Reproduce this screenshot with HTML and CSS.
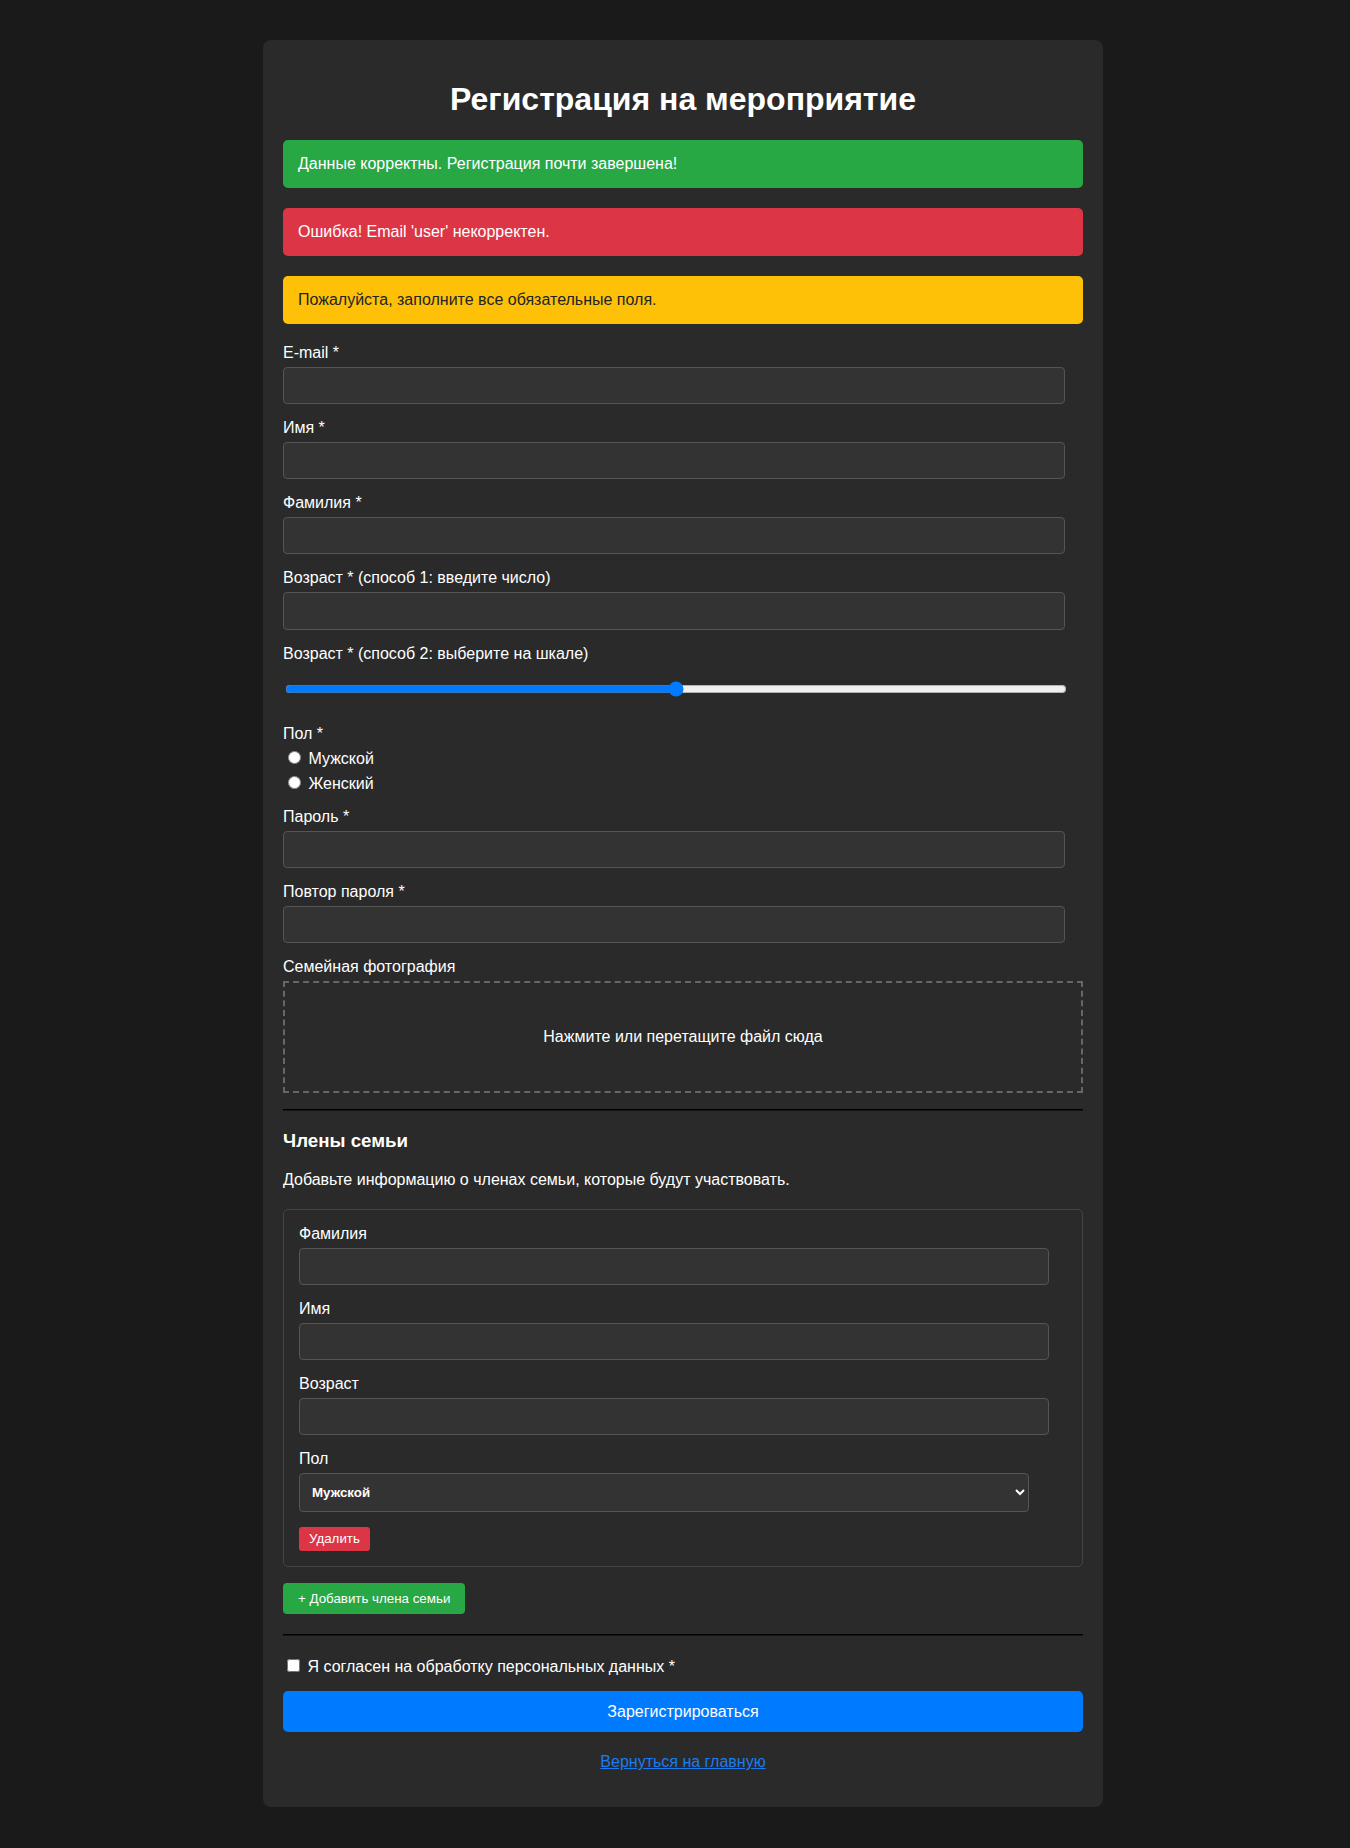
FILE: index.html
```html
<!DOCTYPE html>
<html lang="ru">
<head>
<meta charset="utf-8">
<title>Регистрация на мероприятие</title>
<link rel="stylesheet" href="styles.css">
</head>
<body>
<div class="container">
  <h1 class="title">Регистрация на мероприятие</h1>
  <div class="alert alert-success">Данные корректны. Регистрация почти завершена!</div>
  <div class="alert alert-danger">Ошибка! Email 'user' некорректен.</div>
  <div class="alert alert-warning">Пожалуйста, заполните все обязательные поля.</div>

  <form class="form">
    <div class="form-group">
      <label class="field-label">E-mail *</label>
      <input class="text-input" type="text">
    </div>
    <div class="form-group">
      <label class="field-label">Имя *</label>
      <input class="text-input" type="text">
    </div>
    <div class="form-group">
      <label class="field-label">Фамилия *</label>
      <input class="text-input" type="text">
    </div>
    <div class="form-group">
      <label class="field-label">Возраст * (способ 1: введите число)</label>
      <input class="text-input" type="text">
    </div>
    <div class="form-group">
      <label class="field-label">Возраст * (способ 2: выберите на шкале)</label>
      <input class="range-input" type="range" min="0" max="100" value="50">
    </div>
    <div class="form-group">
      <label class="field-label">Пол *</label>
      <div class="radio-list">
        <label class="radio-row"><input type="radio" name="g"> Мужской</label>
        <label class="radio-row"><input type="radio" name="g"> Женский</label>
      </div>
    </div>
    <div class="form-group">
      <label class="field-label">Пароль *</label>
      <input class="text-input" type="password">
    </div>
    <div class="form-group">
      <label class="field-label">Повтор пароля *</label>
      <input class="text-input" type="password">
    </div>
    <div class="form-group">
      <label class="field-label">Семейная фотография</label>
      <div class="dropzone">Нажмите или перетащите файл сюда</div>
    </div>

    <hr class="sep sep-top">

    <h3 class="section-title">Члены семьи</h3>
    <p class="section-desc">Добавьте информацию о членах семьи, которые будут участвовать.</p>

    <div class="member">
      <div class="form-group">
        <label class="field-label">Фамилия</label>
        <input class="text-input" type="text">
      </div>
      <div class="form-group">
        <label class="field-label">Имя</label>
        <input class="text-input" type="text">
      </div>
      <div class="form-group">
        <label class="field-label">Возраст</label>
        <input class="text-input" type="text">
      </div>
      <div class="form-group">
        <label class="field-label">Пол</label>
        <select class="select-input">
          <option>Мужской</option>
          <option>Женский</option>
        </select>
      </div>
      <button type="button" class="btn-small btn-danger">Удалить</button>
    </div>

    <div class="add-wrap">
      <button type="button" class="btn-add">+ Добавить члена семьи</button>
    </div>

    <hr class="sep sep-bottom">

    <div class="form-group">
      <label class="check-row"><input type="checkbox"> Я согласен на обработку персональных данных *</label>
    </div>

    <button type="button" class="btn-submit">Зарегистрироваться</button>
  </form>

  <p class="back"><a href="#" class="back-link">Вернуться на главную</a></p>
</div>
</body>
</html>
```

FILE: styles.css
```css
html, body {
  background: #1a1a1a;
}
body {
  margin: 0;
  padding: 40px 0 41px 16px;
  font-family: "Liberation Sans", Arial, sans-serif;
  font-size: 16px;
  color: #ffffff;
}
.container {
  max-width: 800px;
  margin: 0 auto;
  padding: 20px;
  background: #2a2a2a;
  border-radius: 8px;
}
.title {
  text-align: center;
  font-size: 32px;
  font-weight: bold;
  margin: 21.44px 0;
  color: #ffffff;
}
.alert {
  padding: 15px;
  border-radius: 5px;
  margin-bottom: 20px;
  color: #ffffff;
}
.alert-success { background: #28a745; }
.alert-danger { background: #dc3545; }
.alert-warning { background: #ffc107; color: #212529; }

.form { margin: 0; }
.form-group { margin-bottom: 15px; }
.field-label {
  display: block;
  margin-bottom: 5px;
}
.text-input {
  display: block;
  box-sizing: border-box;
  width: calc(100% - 18px);
  height: 37.2px;
  padding: 8px;
  margin: 0;
  background: #333333;
  border: 1px solid #555555;
  border-radius: 4px;
  color: #ffffff;
  font-family: "Liberation Sans", Arial, sans-serif;
  font-size: 16px;
}
.range-input {
  display: block;
  width: calc(100% - 18px);
  height: 42px;
  margin: 0 2px;
  padding: 0;
  accent-color: #007bff;
}
.radio-list {
  display: flex;
  flex-direction: column;
  gap: 5px;
}
.radio-row {
  display: block;
  height: 20px;
  line-height: 20px;
}
.radio-row input { margin: 3px 3px 0 5px; }
.dropzone {
  border: 2px dashed #666666;
  padding: 45px 20px;
  text-align: center;
  line-height: 18.4px;
}
.sep {
  border: 0;
  border-top: 1px solid #000000;
  border-bottom: 1px solid #151515;
  height: 0;
}
.sep-top { margin: 16px 0; }
.sep-bottom { margin: 20px 0; }
.section-title {
  font-size: 18.72px;
  font-weight: bold;
  margin: 18.72px 0;
}
.section-desc {
  margin: 16px 0 20px;
}
.member {
  border: 1px solid #444444;
  border-radius: 5px;
  padding: 15px;
  margin-bottom: 16px;
}
.select-input {
  display: block;
  box-sizing: border-box;
  width: 95%;
  height: 38.5px;
  padding: 0 8px;
  margin: 0;
  background: #333333;
  border: 1px solid #555555;
  border-radius: 4px;
  color: #ffffff;
  font-family: "Liberation Sans", Arial, sans-serif;
  font-size: 13.33px;
  font-weight: bold;
}
.btn-small {
  display: inline-block;
  padding: 5px 10px;
  border: none;
  border-radius: 3px;
  color: #ffffff;
  font-family: "Liberation Sans", Arial, sans-serif;
  font-size: 13.33px;
  line-height: 14.5px;
}
.btn-danger { background: #dc3545; }
.add-wrap {
  display: flex;
  margin-bottom: 20px;
}
.btn-add {
  padding: 8px 15px;
  border: none;
  border-radius: 4px;
  background: #28a745;
  color: #ffffff;
  font-family: "Liberation Sans", Arial, sans-serif;
  font-size: 13.33px;
  line-height: 15px;
}
.check-row {
  display: block;
  line-height: 19px;
}
.btn-submit {
  display: block;
  width: 100%;
  padding: 11px;
  border: none;
  border-radius: 5px;
  background: #007bff;
  color: #ffffff;
  font-family: "Liberation Sans", Arial, sans-serif;
  font-size: 16px;
  line-height: 19px;
}
.back {
  text-align: center;
  margin: 21px 0 16px;
}
.back-link {
  color: #1a7cf0;
  text-decoration: underline;
}
```
